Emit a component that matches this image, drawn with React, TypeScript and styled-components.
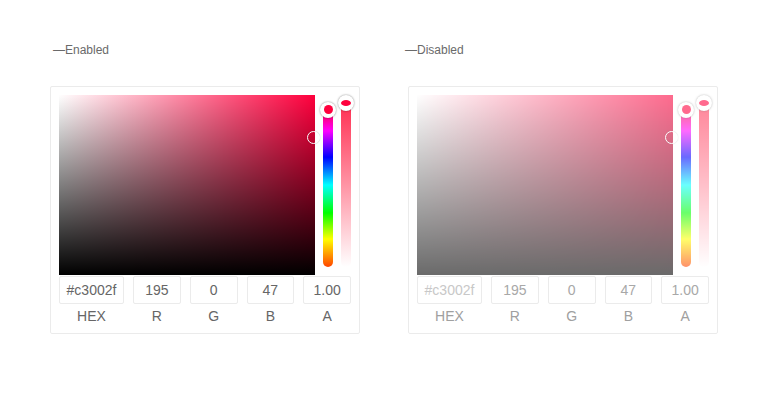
import { FC } from 'react';
import styled, { createGlobalStyle } from 'styled-components';

const GlobalStyle = createGlobalStyle`
  html, body {
    margin: 0;
    padding: 0;
    background: #fff;
    font-family: 'Liberation Sans', Arial, sans-serif;
  }
`;

const HUE = 345.5;
const HUE_COLOR = '#ff003d';
const SAT_X = 1; // saturation 100%
const VAL_Y = 195 / 255;

interface IPickerProps {
  title: string;
  disabled?: boolean;
  shift: number;
}

const fields = [
  { label: 'HEX', value: '#c3002f', hex: true },
  { label: 'R', value: '195' },
  { label: 'G', value: '0' },
  { label: 'B', value: '47' },
  { label: 'A', value: '1.00' },
];

const Picker: FC<IPickerProps> = ({ title, disabled = false, shift }) => (
  <StyledColumn>
    <StyledTitle $shift={shift}>—{title}</StyledTitle>
    <StyledPanel>
      <StyledPickArea $disabled={disabled}>
        <StyledSaturation>
          <StyledSatCursor
            style={{ left: `${SAT_X * 100}%`, top: `${(1 - VAL_Y) * 100}%` }}
          />
        </StyledSaturation>
        <StyledTrack $kind="hue">
          <StyledThumb style={{ top: `${(1 - HUE / 360) * 100}%` }}>
            <StyledThumbDot />
          </StyledThumb>
        </StyledTrack>
        <StyledTrack $kind="alpha">
          <StyledThumb style={{ top: '0%' }}>
            <StyledThumbDot $oval />
          </StyledThumb>
        </StyledTrack>
      </StyledPickArea>
      <StyledFields>
        {fields.map((f) => (
          <StyledField key={f.label}>
            <StyledInput
              value={f.value}
              readOnly
              disabled={disabled}
              $hex={!!f.hex}
            />
            <StyledFieldLabel $disabled={disabled}>{f.label}</StyledFieldLabel>
          </StyledField>
        ))}
      </StyledFields>
    </StyledPanel>
  </StyledColumn>
);

const App: FC = () => (
  <>
    <GlobalStyle />
    <StyledPage>
      <Picker title="Enabled" shift={3} />
      <Picker title="Disabled" shift={-3} disabled />
    </StyledPage>
  </>
);

const StyledPage = styled.div`
  display: flex;
  gap: 48px;
  padding: 42px 0 0 50px;
`;

const StyledColumn = styled.div`
  display: flex;
  flex-direction: column;
`;

const StyledTitle = styled.div<{ $shift: number }>`
  font-size: 12px;
  line-height: 16px;
  color: #6a6a6a;
  margin-left: ${({ $shift }) => $shift}px;
  margin-bottom: 28px;
`;

const StyledPanel = styled.div`
  width: 292px;
  padding: 8px 8px 7px;
  border: 1px solid #ebebeb;
  border-radius: 2px;
  background: #fff;
`;

const StyledPickArea = styled.div<{ $disabled: boolean }>`
  display: flex;
  gap: 8px;
  height: 180px;
  opacity: ${({ $disabled }) => ($disabled ? 0.58 : 1)};
`;

const StyledSaturation = styled.div`
  position: relative;
  width: 256px;
  height: 180px;
  background: linear-gradient(to top, #000, rgba(0, 0, 0, 0)),
    linear-gradient(to right, #fff, rgba(255, 255, 255, 0)), ${HUE_COLOR};
`;

const StyledSatCursor = styled.div`
  position: absolute;
  width: 11px;
  height: 11px;
  margin: -6px 0 0 -8px;
  border: 1px solid #fff;
  border-radius: 50%;
  box-shadow: 0 0 1px rgba(0, 0, 0, 0.4);
`;

const StyledTrack = styled.div<{ $kind: 'hue' | 'alpha' }>`
  position: relative;
  width: 10px;
  margin: 8px 0 8px;
  border-radius: 5px;
  background: ${({ $kind }) =>
    $kind === 'hue'
      ? 'linear-gradient(to bottom, #f00 0%, #f0f 17%, #00f 33%, #0ff 50%, #0f0 67%, #ff0 83%, #f40 100%)'
      : 'linear-gradient(to bottom, #ff2f52 0%, rgba(255, 60, 90, 0.55) 50%, rgba(255, 60, 90, 0) 100%)'};
`;

const StyledThumb = styled.div`
  position: absolute;
  left: 50%;
  width: 16px;
  height: 16px;
  margin: -8px 0 0 -8px;
  border-radius: 50%;
  background: #fff;
  box-shadow: 0 0 2px rgba(0, 0, 0, 0.5);
  display: flex;
  align-items: center;
  justify-content: center;
`;

const StyledThumbDot = styled.div<{ $oval?: boolean }>`
  width: ${({ $oval }) => ($oval ? 10 : 9)}px;
  height: ${({ $oval }) => ($oval ? 6 : 9)}px;
  border-radius: 50%;
  background: ${HUE_COLOR};
`;

const StyledFields = styled.div`
  display: grid;
  grid-template-columns: 65px repeat(4, 1fr);
  gap: 9px;
  margin-top: 1px;
`;

const StyledField = styled.div`
  display: flex;
  flex-direction: column;
  align-items: center;
`;

const StyledInput = styled.input<{ $hex: boolean }>`
  box-sizing: border-box;
  width: 100%;
  height: 28px;
  padding: 0;
  border: 1px solid #ebebeb;
  border-radius: 2px;
  outline: none;
  background: #fff;
  font-family: 'Liberation Sans', Arial, sans-serif;
  font-size: 14px;
  text-align: center;
  color: #666;

  &:disabled {
    color: ${({ $hex }) => ($hex ? '#c8c8c8' : '#a8a8a8')};
    background: #fff;
  }
`;

const StyledFieldLabel = styled.div<{ $disabled: boolean }>`
  margin-top: 2px;
  font-size: 14px;
  line-height: 20px;
  color: ${({ $disabled }) => ($disabled ? '#a0a0a0' : '#666')};
`;

export default App;
